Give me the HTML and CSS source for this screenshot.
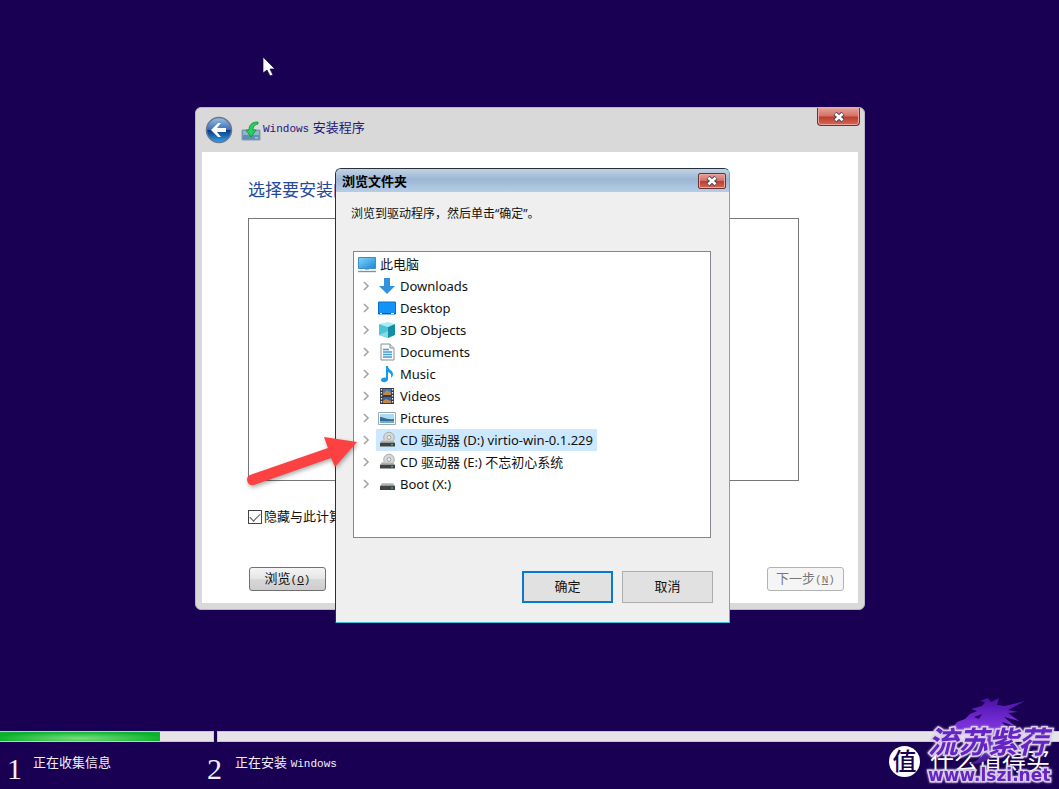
FILE: index.html
```html
<!DOCTYPE html>
<html lang="zh-CN">
<head>
<meta charset="utf-8">
<meta name="viewport" content="width=device-width, initial-scale=1">
<title>Windows 安装程序</title>
<link rel="stylesheet" href="styles.css">
</head>
<body>
<svg width="0" height="0" class="defs" aria-hidden="true">
  <defs>
    <linearGradient id="blue" x1="0" y1="0" x2="1" y2="1"><stop offset="0" stop-color="#7fd6fb"/><stop offset="1" stop-color="#1b87d6"/></linearGradient>
    <linearGradient id="metal" x1="0" y1="0" x2="0" y2="1"><stop offset="0" stop-color="#d4d4d4"/><stop offset="1" stop-color="#8d8d8d"/></linearGradient>
    <linearGradient id="back" x1="0" y1="0" x2="0" y2="1"><stop offset="0" stop-color="#9fbfe4"/><stop offset=".48" stop-color="#3a6fb8"/><stop offset=".5" stop-color="#0c3684"/><stop offset="1" stop-color="#2fa4ea"/></linearGradient>
    <linearGradient id="dragon" x1="0" y1="0" x2="0" y2="1"><stop offset="0" stop-color="#4a10a8"/><stop offset=".4" stop-color="#7a30da"/><stop offset="1" stop-color="#4a1c96"/></linearGradient>
    <symbol id="chevron" viewBox="0 0 8 10"><path d="M2 1l4 4-4 4" fill="none" stroke="#a4a4a4" stroke-width="1.6"/></symbol>
    <symbol id="cross" viewBox="0 0 14 12"><path d="M3 2.5l8 7M11 2.5l-8 7" stroke="#4c4a58" stroke-width="4.6"/><path d="M3.4 2.8l7.2 6.4M10.6 2.8l-7.2 6.4" stroke="#fff" stroke-width="2.6"/></symbol>
    <symbol id="cd" viewBox="0 0 18 18"><circle cx="11" cy="6.5" r="5.3" fill="#d5d8d8" stroke="#a9adad"/><circle cx="11" cy="6.5" r="1.8" fill="#fafafa" stroke="#9b9f9f"/><path d="M4 9h11l2 3H2z" fill="url(#metal)"/><path d="M2 12h15v3.5H2z" fill="#404443"/><path d="M13 13.3h2v1h-2z" fill="#51d66a"/></symbol>
  </defs>
</svg>
<div class="desktop">
  <main class="window">
    <header class="window-head">
      <button class="back" aria-label="返回"><svg viewBox="0 0 28 28"><circle cx="14" cy="14" r="12.5" fill="url(#back)" stroke="#667892" stroke-width="1.5"/><path d="M6 14l7-7h3l-4 5h9v4h-9l4 5h-3z" fill="#fff"/></svg></button>
      <svg class="setup-icon" viewBox="0 0 20 20"><path d="M1 9h18v10H1z" fill="#5f8fb2" stroke="#87a0b0"/><path d="M2 10h16v4H2z" fill="#8fb6cf"/><path d="M14 16h3v1.5h-3z" fill="#9ed5a1"/><path d="M17 1c-6 0-9 3-9 8H5l5 7 5-7h-3c0-3 1-5 5-6z" fill="#29cf5c" stroke="#138a38" stroke-width=".8"/></svg>
      <h1><span class="mono">Windows</span> 安装程序</h1>
      <button class="close close-tab" aria-label="关闭"><svg viewBox="0 0 14 12"><use href="#cross"/></svg></button>
    </header>
    <section class="window-body">
      <h2>选择要安装的驱动程序</h2>
      <div class="driver-list"></div>
      <label class="check"><input type="checkbox" checked>隐藏与此计算机硬件不兼容的驱动程序</label>
      <div class="window-actions">
        <button class="aero">浏览<span class="mono">(<u>O</u>)</span></button>
        <button class="aero" disabled>下一步<span class="mono">(<u>N</u>)</span></button>
      </div>
    </section>
  </main>

  <section class="dialog" role="dialog" aria-labelledby="dialog-title">
    <header class="dialog-head">
      <h2 id="dialog-title">浏览文件夹</h2>
      <button class="close" aria-label="关闭对话框"><svg viewBox="0 0 14 12"><use href="#cross"/></svg></button>
    </header>
    <div class="dialog-body">
      <p>浏览到驱动程序，然后单击“确定”。</p>
      <ul class="tree">
        <li class="root"><svg class="icon" viewBox="0 0 18 18"><path d="M.5 2.5h17v11H.5z" fill="url(#blue)" stroke="#3e8fc1"/><path d="M0 16.5h18" stroke="#7894a6" stroke-width="1.4"/><path d="M7 14h4v1H7z" fill="#a9bcc8"/></svg><span class="name">此电脑</span></li>
        <li><svg class="chevron"><use href="#chevron"/></svg><svg class="icon" viewBox="0 0 18 18"><path d="M6 1h6v8h5l-8 8-8-8h5z" fill="#3391dd"/></svg><span class="name">Downloads</span></li>
        <li><svg class="chevron"><use href="#chevron"/></svg><svg class="icon" viewBox="0 0 18 18"><path d="M.5 3h17v12H.5z" fill="#1493f4" stroke="#0873c8"/><path d="M1 14.5h16" stroke="#0a5b9e"/><path d="M2 14.5h2m9 0h3" stroke="#d9f0ff"/></svg><span class="name">Desktop</span></li>
        <li><svg class="chevron"><use href="#chevron"/></svg><svg class="icon" viewBox="0 0 18 18"><path d="M1 3l9-2 7 2-7 3z" fill="#a7edf3"/><path d="M1 3l9 3v11l-9-3z" fill="#4cc4d6"/><path d="M10 6l7-3v11l-7 3z" fill="#168ca7"/><path d="M1 14l9-4v7z" fill="#82dbe5"/></svg><span class="name">3D Objects</span></li>
        <li><svg class="chevron"><use href="#chevron"/></svg><svg class="icon" viewBox="0 0 18 18"><path d="M3 1h9l4 4v12H3z" fill="#f9fbfc" stroke="#8b9296"/><path d="M12 1v4h4" fill="#dde2e5" stroke="#8b9296"/><path d="M5 6.5h6M5 9h9M5 11.5h9M5 14h9" stroke="#479bd5" stroke-width="1.3"/></svg><span class="name">Documents</span></li>
        <li><svg class="chevron"><use href="#chevron"/></svg><svg class="icon" viewBox="0 0 18 18"><path d="M8 1h2c0 4 5 4 5 8 0 2-1 3-2 4 1-4-1-5-3-6v7c0 4-7 4-7 1 0-2 3-3 5-2z" fill="#129be9"/></svg><span class="name">Music</span></li>
        <li><svg class="chevron"><use href="#chevron"/></svg><svg class="icon" viewBox="0 0 18 18"><path d="M2 1h14v16H2z" fill="#353b43"/><path d="M5 2h8v6H5z" fill="#4478bf"/><path d="M5 10h8v6H5z" fill="#3563a8"/><path d="M5 7l4-4 4 3v2H5zM5 14l3-2 5 2v2H5z" fill="#c38748"/><path d="M3.5 2v14M14.5 2v14" stroke="#f3f3f3" stroke-width="1.3" stroke-dasharray="1.4 1.6"/></svg><span class="name">Videos</span></li>
        <li><svg class="chevron"><use href="#chevron"/></svg><svg class="icon" viewBox="0 0 18 18"><path d="M.5 3.5h17v12H.5z" fill="#fff" stroke="#9da7ae"/><path d="M2 5h14v9H2z" fill="#a9dbf5"/><path d="M2 8c4 0 6 3 14 2v4H2z" fill="#366d91"/><path d="M2 12h14v2H2z" fill="#6caed5"/></svg><span class="name">Pictures</span></li>
        <li class="selected"><svg class="chevron"><use href="#chevron"/></svg><svg class="icon" viewBox="0 0 18 18"><use href="#cd"/></svg><span class="name">CD 驱动器 (D:) virtio-win-0.1.229</span></li>
        <li><svg class="chevron"><use href="#chevron"/></svg><svg class="icon" viewBox="0 0 18 18"><use href="#cd"/></svg><span class="name">CD 驱动器 (E:) 不忘初心系统</span></li>
        <li><svg class="chevron"><use href="#chevron"/></svg><svg class="icon" viewBox="0 0 18 18"><path d="M4 8h11l2 3H2z" fill="url(#metal)"/><path d="M2 11h15v4H2z" fill="#404443"/><path d="M13 12.5h2v1h-2z" fill="#51d66a"/></svg><span class="name">Boot (X:)</span></li>
      </ul>
      <div class="dialog-actions">
        <button class="flat primary">确定</button>
        <button class="flat">取消</button>
      </div>
    </div>
  </section>

  <svg class="arrow" viewBox="0 0 116 58" aria-hidden="true"><path d="M6 42L84 15l-4-11 33 5-22 25-4-9L10 52c-6 2-10-7-4-10z" fill="#fb4141"/></svg>
  <svg class="pointer" viewBox="0 0 14 22" aria-hidden="true"><path d="M1 1v16l4-3 3 6 3-1-3-6h5z" fill="#fff" stroke="#15003c" stroke-width=".7"/></svg>

  <footer class="setup-progress">
    <div class="step step-one"><div class="bar"><div class="fill"></div></div><div class="caption"><span class="number">1</span><span>正在收集信息</span></div></div>
    <div class="step step-two"><div class="bar"></div><div class="caption"><span class="number">2</span><span>正在安装 <span class="mono">Windows</span></span></div></div>
  </footer>

  <div class="watermark">
    <span class="badge">值</span>
    <span class="brand">什么值得买</span>
    <svg class="dragon" viewBox="0 0 80 68" aria-hidden="true"><path d="M7 29l3-4 8-3 5-5 7-3-6-2 11-3 3-4-5-1 8-3 3 4 8-4-2 7 8 1 20-5-17 9 10 2-10 1 11 8-15-4 11 9-13-4 7 8-9-3c3 10 0 22-9 30-6 5-12 7-21 7 11-5 17-12 16-20-1-7-7-9-9-14l-7 2-9 3z" fill="url(#dragon)"/><path d="M27 20l8-3-3 5z" fill="#2b0870"/></svg>
    <span class="script">流苏紫荇</span>
    <span class="url">www.lszi.net</span>
  </div>
</div>
</body>
</html>
```

FILE: styles.css
```css
* { box-sizing: border-box; }
body {
  margin: 0;
  font: 13px/20px "Liberation Sans", "Noto Sans CJK SC", sans-serif;
  color: #111;
}
button { font: inherit; color: inherit; padding: 0; cursor: pointer; }
h1, h2, p, ul { margin: 0; padding: 0; font-weight: 400; }
.defs { position: absolute; }
.mono { font-family: "Liberation Mono", monospace; font-size: 11px; }

.desktop {
  position: relative;
  display: flex;
  flex-direction: column;
  justify-content: flex-end;
  min-height: 100vh;
  overflow: hidden;
  background: #1a0052;
}

/* Setup window */
.window {
  position: absolute;
  left: 195px;
  top: 107px;
  width: 670px;
  padding: 0 6px 6px;
  background: #d9d9d9;
  border: 1px solid #b9b5c8;
  border-radius: 6px;
}
.window-head { display: flex; align-items: flex-start; height: 44px; }
.back { width: 28px; height: 28px; margin: 8px 8px 0 3px; border: 0; background: none; }
.back svg { display: block; }
.setup-icon { width: 20px; height: 20px; margin-top: 13px; }
.window h1 { flex: 1; margin: 10px 0 0 2px; font-size: 13px; color: #24157a; }
.close {
  display: flex;
  align-items: center;
  justify-content: center;
  width: 28px;
  height: 16px;
  border: 1px solid #66333a;
  border-radius: 2px;
  background: linear-gradient(#e4a298, #d57063 48%, #bd3c2d 52%, #d06a58);
  box-shadow: inset 0 0 0 1px #e9a79d;
}
.close svg { width: 14px; height: 12px; }
.close-tab { width: 43px; height: 18px; margin-right: -2px; border-top: 0; border-radius: 0 0 4px 4px; }
.window-body { padding: 28px 14px 12px 46px; background: #fff; }
.window-body h2 { font-size: 17px; line-height: 22px; color: #23499d; }
.driver-list { height: 263px; margin: 16px 45px 26px 0; border: 1px solid #777; }
.check { display: flex; align-items: center; gap: 2px; height: 20px; }
.check input {
  appearance: none;
  display: grid;
  place-items: center;
  width: 14px;
  height: 14px;
  margin: 0;
  border: 1px solid #444;
}
.check input:checked::after {
  content: "";
  width: 9px;
  height: 5px;
  border: solid #555;
  border-width: 0 0 1px 1px;
  transform: translateY(-1px) rotate(-45deg);
}
.window-actions { display: flex; justify-content: space-between; margin-top: 40px; padding-left: 1px; }
.aero {
  width: 77px;
  height: 24px;
  border: 1px solid #707070;
  border-radius: 3px;
  background: linear-gradient(#f4f4f4, #e6e6e6 48%, #d8d8d8 52%, #cdcdcd);
}
.aero:disabled { color: #777; border-color: #b3b3b3; background: #f5f5f5; }

/* Folder dialog */
.dialog {
  position: absolute;
  left: 335px;
  top: 168px;
  width: 395px;
  border: 1px solid #26303c;
  border-right-color: #3fbcdc;
  border-bottom-color: #3fbcdc;
  border-radius: 6px 6px 0 0;
  background: #efefef;
}
.dialog-head {
  display: flex;
  align-items: center;
  justify-content: space-between;
  height: 23px;
  padding: 2px 3px 0 6px;
  border-radius: 5px 5px 0 0;
  background: linear-gradient(#c3d2e4, #9bb7d4 45%, #b7cde6);
}
.dialog-head .close { margin-top: -2px; }
.dialog-head h2 { font-size: 13px; font-weight: 700; color: #000; }
.dialog-body { padding: 12px 16px 19px 15px; }
.dialog-body p { font-family: "Noto Sans", "Noto Sans CJK SC", sans-serif; font-size: 12px; height: 20px; }
.tree {
  height: 287px;
  margin: 27px 2px 33px;
  padding: 1px 4px;
  border: 1px solid #828790;
  background: #fff;
  list-style: none;
  font-family: "Noto Sans", "Noto Sans CJK SC", sans-serif;
}
.tree li { display: flex; align-items: center; height: 22px; }
.chevron { width: 8px; height: 10px; margin: 0 6px 0 4px; }
.icon { width: 18px; height: 18px; }
.tree .name { padding: 0 4px; line-height: 22px; white-space: nowrap; }
.tree li:not(.root) .icon { width: 22px; height: 22px; padding: 2px; }
.tree li:not(.root) .name { padding: 0 4px 0 2px; }
.selected .icon, .selected .name { background: #cce8ff; }
.dialog-actions { display: flex; justify-content: flex-end; gap: 9px; }
.flat { width: 91px; height: 32px; border: 1px solid #adadad; background: #e1e1e1; }
.primary { border: 2px solid #0878d0; }

/* Overlays */
.arrow { position: absolute; left: 244px; top: 433px; width: 116px; height: 58px; filter: drop-shadow(1px 2px 2px #0005); }
.pointer { position: absolute; left: 262px; top: 56px; width: 14px; height: 22px; }

/* Installation progress */
.setup-progress { display: flex; gap: 3px; height: 58px; color: #f2effa; }
.step-one { width: 214px; }
.step-two { flex: 1; }
.bar { height: 11px; border: solid #c9c5d5; border-width: 1px 0; background: #e6e4e8; }
.step-one .bar { border-right-width: 1px; }
.step-two .bar { border-left-width: 1px; }
.fill { width: 75%; height: 9px; background: radial-gradient(ellipse at 50% 70%, #78df7d, #0bb12c 75%); }
.caption { display: flex; align-items: flex-start; padding-top: 11px; }
.number { width: 26px; margin-top: 6px; font: 30px/20px "Liberation Serif", serif; }
.step-one .caption { padding-left: 7px; }
.step-two .caption { margin-left: -10px; }
.step-two .number { width: 28px; }

/* Corner watermark */
.watermark { position: absolute; right: 0; bottom: 0; width: 172px; height: 94px; white-space: nowrap; }
.watermark > * { position: absolute; }
.dragon { left: 60px; top: 2px; width: 80px; height: 68px; }
.badge {
  left: 2px;
  top: 51px;
  width: 31px;
  height: 31px;
  border-radius: 50%;
  background: #fff;
  color: #1a0052;
  font-size: 24px;
  font-weight: 500;
  line-height: 31px;
  text-align: center;
}
.brand { left: 43px; top: 51px; color: #fff; font-size: 24px; line-height: 32px; }
.script, .url {
  color: #6425c4;
  font-weight: 700;
  -webkit-text-stroke: 3px #d9cdea;
  paint-order: stroke fill;
  filter: drop-shadow(0 0 1px #d9cdea);
}
.script { left: 41px; top: 32px; font-size: 30px; line-height: 32px; font-style: italic; }
.url { left: 41px; top: 68px; font: 700 17px/24px "DejaVu Sans", sans-serif; }
```
